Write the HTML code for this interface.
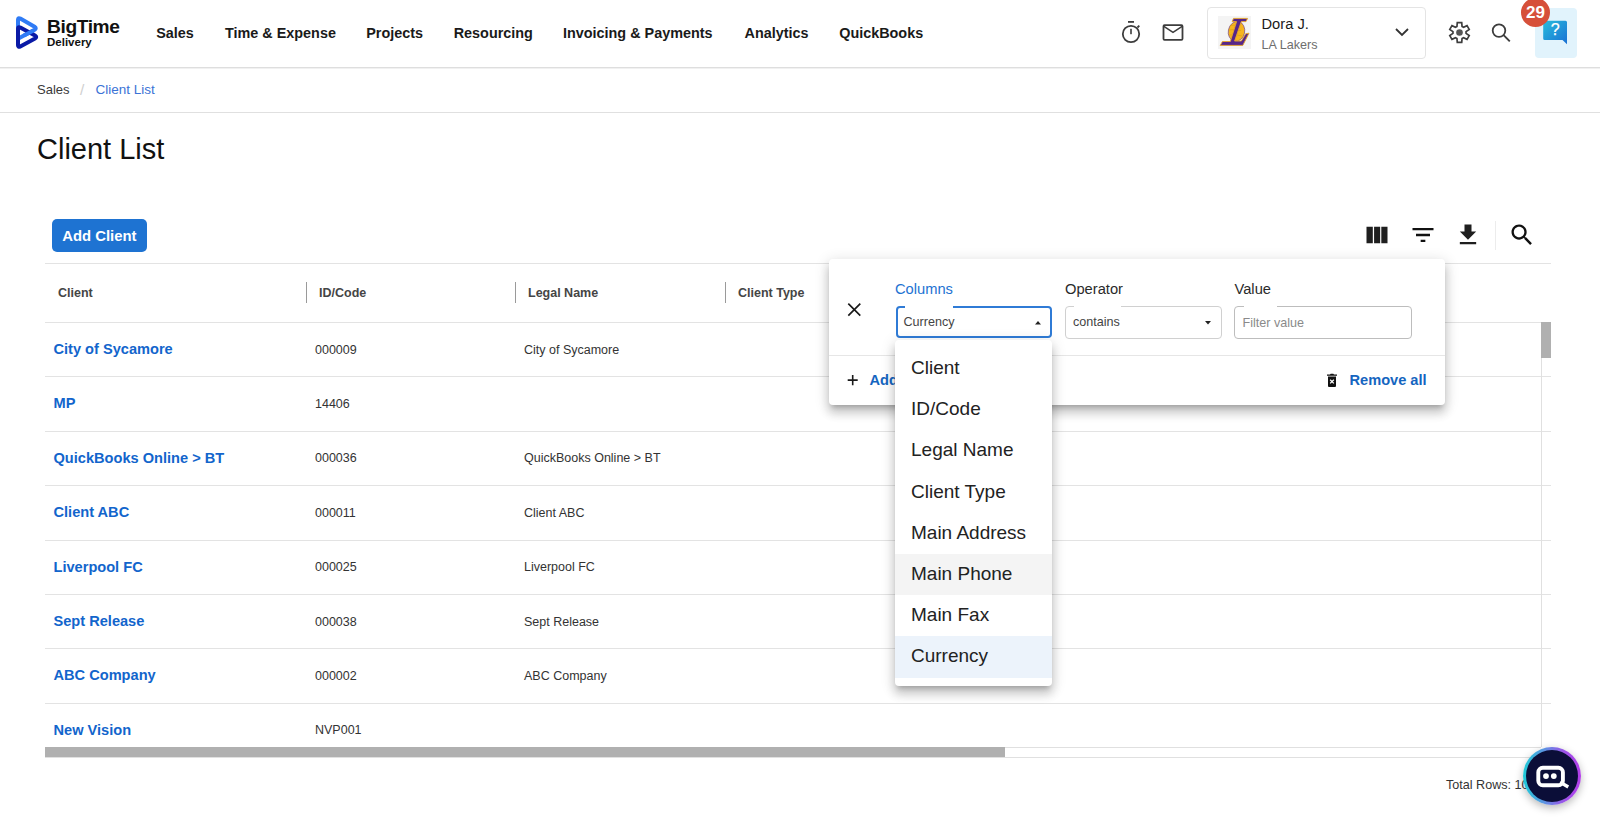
<!DOCTYPE html>
<html><head><meta charset="utf-8">
<style>
*{box-sizing:border-box;margin:0;padding:0}
html,body{width:1600px;height:824px;overflow:hidden;background:#fff;font-family:"Liberation Sans",sans-serif;color:#222}
.abs{position:absolute}
.t{position:absolute;white-space:nowrap;line-height:1}
.nav{font-weight:bold;font-size:14.4px;color:#1a1a1a}
.hdr{font-weight:bold;font-size:12.5px;color:#454545}
.lnk{font-weight:bold;font-size:14.6px;color:#1265cc}
.cell{font-size:12.5px;color:#333}
.hl{position:absolute;left:45px;width:1506px;height:1px;background:#e3e3e3}
.sep{position:absolute;top:282px;width:1px;height:21px;background:#9a9a9a}
.dd-item{position:absolute;left:895px;width:156.5px;height:41.2px}
.dd-item span{position:absolute;left:16px;font-size:19px;color:#222;white-space:nowrap;line-height:1}
</style></head><body>
<!-- header -->
<div class="abs" style="left:0;top:0;width:1600px;height:68px;background:#fff;border-bottom:1px solid #dedede;box-shadow:0 1px 0 #f1f1f1"></div>
<svg class="abs" style="left:10px;top:10px" width="40" height="45" viewBox="10 10 40 45">
  <path d="M18 30 L18 19.8 Q18 17.3 20.3 18.6 L34.6 26.8 Q36.9 28.3 34.6 29.8 L18 38.8" fill="none" stroke="#2f7bf5" stroke-width="4" stroke-linejoin="round"/>
  <path d="M18 28.8 Q18 26.3 20.3 27.6 L35 35.6 Q37.4 37 35 38.4 L20.3 46.4 Q18 47.7 18 45.2 Z" fill="none" stroke="#0a1aa6" stroke-width="4" stroke-linejoin="round"/>
  <path d="M33.5 30.5 L24 35.6" fill="none" stroke="#2f7bf5" stroke-width="4" stroke-linecap="butt"/>
</svg>
<div class="t" style="left:47px;top:16.5px;font-size:19.2px;font-weight:bold;color:#111;letter-spacing:-0.4px">BigTime</div>
<div class="t" style="left:47px;top:37px;font-size:11.5px;font-weight:bold;color:#111">Delivery</div>

<div class="t nav" style="left:156.2px;top:25.5px">Sales</div>
<div class="t nav" style="left:225px;top:25.5px">Time &amp; Expense</div>
<div class="t nav" style="left:366.2px;top:25.5px">Projects</div>
<div class="t nav" style="left:453.7px;top:25.5px">Resourcing</div>
<div class="t nav" style="left:563px;top:25.5px">Invoicing &amp; Payments</div>
<div class="t nav" style="left:744.5px;top:25.5px">Analytics</div>
<div class="t nav" style="left:839.2px;top:25.5px">QuickBooks</div>

<!-- stopwatch -->
<svg class="abs" style="left:1118px;top:18px" width="26" height="28" viewBox="0 0 26 28">
  <circle cx="13" cy="16" r="8.2" fill="none" stroke="#3d3d3d" stroke-width="1.8"/>
  <rect x="10" y="3" width="6" height="1.8" fill="#3d3d3d"/>
  <rect x="12.2" y="10.8" width="1.6" height="5.4" fill="#3d3d3d"/>
  <path d="M19.5 9.5 L21.3 7.7" stroke="#3d3d3d" stroke-width="1.8"/>
</svg>
<!-- mail -->
<svg class="abs" style="left:1160px;top:22px" width="26" height="22" viewBox="0 0 26 22">
  <rect x="3.5" y="3.2" width="19" height="14.6" rx="1" fill="none" stroke="#3d3d3d" stroke-width="1.8"/>
  <path d="M3.5 4.2 L13 10.3 L22.5 4.2" fill="none" stroke="#3d3d3d" stroke-width="1.6"/>
</svg>

<!-- user chip -->
<div class="abs" style="left:1207px;top:7px;width:219px;height:52px;border:1px solid #e4e4e4;border-radius:4px"></div>
<div class="abs" style="left:1218px;top:16px;width:33px;height:33px;background:#f4f4f4"></div>
<svg class="abs" style="left:1218px;top:16px" width="33" height="33" viewBox="0 0 33 33">
  <ellipse cx="18.5" cy="15.4" rx="8.2" ry="10" fill="#f6b51e" stroke="#6a3a8a" stroke-width="0.6" transform="rotate(12 18.5 15.4)"/>
  <path d="M12 9.5 Q16 8.5 20 10 M10.5 14 Q16 12.8 23 14.5 M12 19 Q18 18 24 20" stroke="#d99a10" stroke-width="0.6" fill="none"/>
  <polygon points="15.5,2.4 29.6,2.4 28,5.6 23.3,5.6 16.6,25 23.3,25 27.7,17.7 31,17.2 24.8,29.4 2.2,29.4 4.4,25.5 12.3,25.5 18.6,5.6 14.2,5.6" fill="#56268a" stroke="#e9a728" stroke-width="0.9" stroke-linejoin="miter"/>
</svg>
<div class="t" style="left:1261.5px;top:16.5px;font-size:14.7px;color:#1a1a1a">Dora J.</div>
<div class="t" style="left:1261.5px;top:39px;font-size:12.6px;color:#6e6e6e">LA Lakers</div>
<svg class="abs" style="left:1393px;top:25px" width="18" height="14" viewBox="0 0 18 14">
  <path d="M3 4 L9 10 L15 4" fill="none" stroke="#333" stroke-width="1.8"/>
</svg>
<!-- gear -->
<svg class="abs" style="left:1447px;top:20px" width="25" height="25" viewBox="0 0 25 25">
  <polygon points="9.95,6.41 10.29,2.54 14.71,2.54 15.05,6.41 16.50,7.25 20.02,5.61 22.23,9.43 19.05,11.66 19.05,13.34 22.23,15.57 20.02,19.39 16.50,17.75 15.05,18.59 14.71,22.46 10.29,22.46 9.95,18.59 8.50,17.75 4.98,19.39 2.77,15.57 5.95,13.34 5.95,11.66 2.77,9.43 4.98,5.61 8.50,7.25" fill="none" stroke="#3d3d3d" stroke-width="1.7" stroke-linejoin="miter"/>
  <circle cx="12.5" cy="12.5" r="3.3" fill="#555"/>
</svg>
<!-- search header -->
<svg class="abs" style="left:1488px;top:20px" width="26" height="26" viewBox="0 0 26 26">
  <circle cx="11" cy="10.6" r="6.3" fill="none" stroke="#3d3d3d" stroke-width="1.8"/>
  <path d="M15.6 15.2 L21.8 21.4" stroke="#3d3d3d" stroke-width="1.9"/>
</svg>
<!-- help -->
<div class="abs" style="left:1535px;top:7.5px;width:41.5px;height:50.5px;background:#e1f3fc;border-radius:4px"></div>
<svg class="abs" style="left:1542px;top:18px" width="27" height="28" viewBox="0 0 27 28">
  <defs><linearGradient id="hg" x1="0" y1="0" x2="1" y2="1"><stop offset="0" stop-color="#27bcdc"/><stop offset="1" stop-color="#1a70d4"/></linearGradient></defs>
  <path d="M2.7 2.7 Q1.2 2.7 1.2 4.2 L1.2 20.5 Q1.2 22 2.7 22 L20.5 22 L25 26.2 L25 4.2 Q25 2.7 23.5 2.7 Z" fill="url(#hg)"/>
  <text x="13.1" y="17.2" font-family="Liberation Sans" font-size="16" fill="#fff" text-anchor="middle" stroke="#fff" stroke-width="0.25">?</text>
</svg>
<div class="abs" style="left:1521px;top:-2px;width:29px;height:29px;border-radius:50%;background:#d6503a"></div>
<div class="t" style="left:1521px;top:3.6px;width:29px;text-align:center;font-size:17px;font-weight:bold;color:#fff">29</div>

<!-- breadcrumb -->
<div class="t" style="left:37px;top:82.8px;font-size:13px;color:#3a3a3a">Sales</div>
<div class="t" style="left:80px;top:81.5px;font-size:15.5px;color:#d0d0d0">/</div>
<div class="t" style="left:95.6px;top:82.6px;font-size:13.5px;color:#3b73d6">Client List</div>
<div class="abs" style="left:0;top:112px;width:1600px;height:1px;background:#e0e0e0"></div>

<div class="t" style="left:37px;top:135px;font-size:29px;color:#111">Client List</div>

<!-- add client -->
<div class="abs" style="left:52px;top:219.2px;width:95px;height:32.4px;background:#1e73d2;border-radius:5px"></div>
<div class="t" style="left:62.2px;top:228.5px;font-size:14.85px;font-weight:bold;color:#fff">Add Client</div>

<!-- toolbar icons -->
<svg class="abs" style="left:1362.5px;top:221px" width="28" height="28" viewBox="0 0 24 24"><path fill="#1f1f1f" d="M3 5h5.4v14H3zM9.5 5h5.2v14H9.5zM15.7 5H21v14h-5.3z"/></svg>
<svg class="abs" style="left:1408.5px;top:221px" width="28" height="28" viewBox="0 0 24 24"><path fill="#111" d="M10 18h4v-2h-4v2zM3 6v2h18V6H3zm3 7h12v-2H6v2z"/></svg>
<svg class="abs" style="left:1454.2px;top:221px" width="28" height="28" viewBox="0 0 24 24"><path fill="#1f1f1f" d="M19 9h-4V3H9v6H5l7 7 7-7zM5 18v2h14v-2H5z"/></svg>
<div class="abs" style="left:1495px;top:221px;width:1px;height:29px;background:#ececec"></div>
<svg class="abs" style="left:1508px;top:221px" width="28" height="28" viewBox="0 0 24 24"><path fill="#111" d="M15.5 14h-.79l-.28-.27C15.41 12.59 16 11.11 16 9.5 16 5.91 13.09 3 9.5 3S3 5.91 3 9.5 5.91 16 9.5 16c1.61 0 3.09-.59 4.23-1.570l.27.28v.79l5 4.99L20.49 19l-4.99-5zm-6 0C7.01 14 5 11.99 5 9.5S7.01 5 9.5 5 14 7.01 14 9.5 11.99 14 9.5 14z"/></svg>

<!-- table -->
<div class="hl" style="top:263px"></div>
<div class="hl" style="top:322px"></div>
<div class="t hdr" style="left:58px;top:287px">Client</div>
<div class="sep" style="left:306px"></div>
<div class="t hdr" style="left:319px;top:287px">ID/Code</div>
<div class="sep" style="left:515px"></div>
<div class="t hdr" style="left:528px;top:287px">Legal Name</div>
<div class="sep" style="left:725px"></div>
<div class="t hdr" style="left:738px;top:287px">Client Type</div>

<div id="rows"></div>
<div class="t lnk" style="left:53.5px;top:341.9px">City of Sycamore</div>
<div class="t cell" style="left:315px;top:343.5px">000009</div>
<div class="t cell" style="left:524px;top:343.5px">City of Sycamore</div>
<div class="hl" style="top:376px"></div>
<div class="t lnk" style="left:53.5px;top:396.3px">MP</div>
<div class="t cell" style="left:315px;top:397.9px">14406</div>
<div class="hl" style="top:431px"></div>
<div class="t lnk" style="left:53.5px;top:450.7px">QuickBooks Online &gt; BT</div>
<div class="t cell" style="left:315px;top:452.3px">000036</div>
<div class="t cell" style="left:524px;top:452.3px">QuickBooks Online &gt; BT</div>
<div class="hl" style="top:485px"></div>
<div class="t lnk" style="left:53.5px;top:505.1px">Client ABC</div>
<div class="t cell" style="left:315px;top:506.7px">000011</div>
<div class="t cell" style="left:524px;top:506.7px">Client ABC</div>
<div class="hl" style="top:540px"></div>
<div class="t lnk" style="left:53.5px;top:559.5px">Liverpool FC</div>
<div class="t cell" style="left:315px;top:561.1px">000025</div>
<div class="t cell" style="left:524px;top:561.1px">Liverpool FC</div>
<div class="hl" style="top:594px"></div>
<div class="t lnk" style="left:53.5px;top:613.9px">Sept Release</div>
<div class="t cell" style="left:315px;top:615.5px">000038</div>
<div class="t cell" style="left:524px;top:615.5px">Sept Release</div>
<div class="hl" style="top:648px"></div>
<div class="t lnk" style="left:53.5px;top:668.3px">ABC Company</div>
<div class="t cell" style="left:315px;top:669.9px">000002</div>
<div class="t cell" style="left:524px;top:669.9px">ABC Company</div>
<div class="hl" style="top:703px"></div>
<div class="t lnk" style="left:53.5px;top:722.7px">New Vision</div>
<div class="t cell" style="left:315px;top:724.3px">NVP001</div>
<!-- right border + scrollbars -->
<div class="abs" style="left:1541px;top:358px;width:1px;height:389px;background:#e0e0e0"></div>
<div class="abs" style="left:1541px;top:322px;width:10px;height:36px;background:#b0b0b0"></div>
<div class="abs" style="left:45px;top:747px;width:1496px;height:1px;background:#e0e0e0"></div>
<div class="abs" style="left:45px;top:757px;width:1496px;height:1px;background:#e0e0e0"></div>
<div class="abs" style="left:45px;top:747px;width:960px;height:10px;background:#b0b0b0"></div>
<div class="t" style="left:1446px;top:779px;font-size:12.6px;color:#333">Total Rows: 10</div>

<!-- filter panel -->
<div class="abs" style="left:829px;top:259px;width:616px;height:146px;background:#fff;border-radius:4px;box-shadow:0 5px 5px -3px rgba(0,0,0,.2),0 8px 10px 1px rgba(0,0,0,.14),0 3px 14px 2px rgba(0,0,0,.12)"></div>
<div class="abs" style="left:829px;top:355px;width:616px;height:1px;background:#e6e6e6"></div>
<svg class="abs" style="left:842px;top:297px" width="24" height="24" viewBox="842 297 24 24"><path d="M848.3 303.7 L860.3 315.7 M860.3 303.7 L848.3 315.7" stroke="#1a1a1a" stroke-width="1.7"/></svg>
<svg class="abs" style="left:841px;top:368px" width="24" height="24" viewBox="841 368 24 24"><path d="M847.7 380.1 H857.7 M852.7 375 V385.3" stroke="#1a1a1a" stroke-width="1.6"/></svg>
<div class="t" style="left:869.5px;top:373px;font-size:14.6px;font-weight:bold;color:#1565c0">Add filter</div>

<div class="t" style="left:895px;top:282px;font-size:14.7px;color:#1e73d2">Columns</div>
<div class="t" style="left:1065px;top:282px;font-size:14.7px;color:#2a2a2a">Operator</div>
<div class="t" style="left:1234.5px;top:282px;font-size:14.7px;color:#2a2a2a">Value</div>

<div class="abs" style="left:896px;top:305.8px;width:156px;height:32px;border:2px solid #2f7bd6;border-radius:4px"></div>
<div class="abs" style="left:905px;top:305px;width:48px;height:4px;background:#fff"></div>
<div class="t" style="left:903.5px;top:315.5px;font-size:12.6px;color:#444">Currency</div>
<svg class="abs" style="left:1034px;top:318px" width="8" height="8" viewBox="0 0 8 8"><path d="M1 6.5 L4 3 L7 6.5Z" fill="#222"/></svg>

<div class="abs" style="left:1064.5px;top:306px;width:157px;height:32.5px;border:1px solid #d0d0d0;border-radius:4px"></div>
<div class="abs" style="left:1074px;top:305px;width:47px;height:3px;background:#fff"></div>
<div class="t" style="left:1073px;top:315.5px;font-size:12.6px;color:#444">contains</div>
<svg class="abs" style="left:1204px;top:319px" width="8" height="8" viewBox="0 0 8 8"><path d="M1 2 L4 5.5 L7 2Z" fill="#222"/></svg>

<div class="abs" style="left:1234px;top:306px;width:178px;height:32.5px;border:1px solid #bdbdbd;border-radius:4px"></div>
<div class="abs" style="left:1244px;top:305px;width:33px;height:3px;background:#fff"></div>
<div class="t" style="left:1242.5px;top:316.5px;font-size:12.6px;color:#8a8a8a">Filter value</div>

<svg class="abs" style="left:1324px;top:372px" width="16" height="16" viewBox="0 0 16 16"><path fill="#111" d="M4 4.5h8v9.5q0 1-1 1H5q-1 0-1-1z M3 2.5h3l.7-.8h2.6l.7.8h3v1.2H3z"/><path d="M6.2 7.8 L9.8 11.4 M9.8 7.8 L6.2 11.4" stroke="#fff" stroke-width="1.3"/></svg>
<div class="t" style="left:1349.5px;top:373px;font-size:14.6px;font-weight:bold;color:#1565c0">Remove all</div>

<!-- dropdown -->
<div class="abs" style="left:895px;top:340px;width:156.5px;height:345.6px;background:#fff;border-radius:4px;box-shadow:0 5px 5px -3px rgba(0,0,0,.2),0 8px 10px 1px rgba(0,0,0,.14),0 3px 14px 2px rgba(0,0,0,.12)"></div>
<div class="dd-item" style="top:348.0px;"><span style="top:10.1px">Client</span></div>
<div class="dd-item" style="top:389.2px;"><span style="top:10.1px">ID/Code</span></div>
<div class="dd-item" style="top:430.4px;"><span style="top:10.1px">Legal Name</span></div>
<div class="dd-item" style="top:471.6px;"><span style="top:10.1px">Client Type</span></div>
<div class="dd-item" style="top:512.8px;"><span style="top:10.1px">Main Address</span></div>
<div class="dd-item" style="top:554.0px;background:#f4f4f4;"><span style="top:10.1px">Main Phone</span></div>
<div class="dd-item" style="top:595.2px;"><span style="top:10.1px">Main Fax</span></div>
<div class="dd-item" style="top:636.4px;background:#ecf3fb;"><span style="top:10.1px">Currency</span></div>
<!-- chatbot -->
<div class="abs" style="left:1522.5px;top:747px;width:58px;height:58px;border-radius:50%;background:linear-gradient(90deg,#1ecbd6 0%,#5a96e2 35%,#9a55e8 70%,#b43de9 100%);box-shadow:0 3px 9px rgba(0,0,0,.28)"></div>
<div class="abs" style="left:1525.5px;top:750px;width:52px;height:52px;border-radius:50%;background:#0b0e38"></div>
<svg class="abs" style="left:1530px;top:760px" width="44" height="34" viewBox="1530 760 44 34">
  <rect x="1538.3" y="767.7" width="24.6" height="17.5" rx="4.5" fill="none" stroke="#fff" stroke-width="3.9"/>
  <path d="M1561.5 783 L1566.8 786.2" stroke="#fff" stroke-width="3.4" stroke-linecap="square"/>
  <circle cx="1546" cy="776.1" r="2.9" fill="#fff"/>
  <circle cx="1553.8" cy="776.1" r="2.9" fill="#fff"/>
</svg>
</body></html>
